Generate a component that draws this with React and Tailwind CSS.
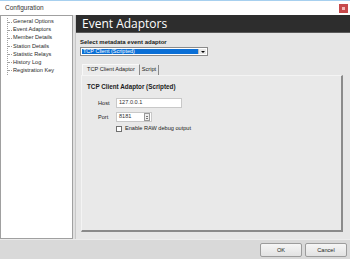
import React from 'react';

const treeItems = [
  'General Options',
  'Event Adaptors',
  'Member Details',
  'Station Details',
  'Statistic Relays',
  'History Log',
  'Registration Key',
];

const TreeView = () => (
  <div className="w-[73px] bg-white border border-[#a0a0a0] pt-[1px]">
    <div className="ml-[6px] mt-[1px] border-l border-dotted border-[#a0a0a0] w-fit">
      {treeItems.map((item) => (
        <div key={item} className="flex items-center h-[8.1px]">
          <span className="w-[4px] border-t border-dotted border-[#a0a0a0]" />
          <span className="ml-[1px] text-[5.6px] leading-none text-[#2a2a2a] whitespace-nowrap">{item}</span>
        </div>
      ))}
    </div>
  </div>
);

const App = () => {
  return (
    <div
      className="w-[350px] h-[259px] flex flex-col bg-[#d9d9d9] overflow-hidden border-t border-[#a7d0ef]"
      style={{ fontFamily: '"Liberation Sans", Arial, sans-serif' }}
    >
      {/* title bar */}
      <div className="h-[14px] bg-white flex items-center justify-between pl-[5px] pr-[2px]">
        <span className="text-[6.5px] text-[#333]">Configuration</span>
        <div className="w-[9px] h-[9px] bg-[#c7494b] flex items-center justify-center">
          <span className="w-[3px] h-[3px] bg-[#f2b8b8]" />
        </div>
      </div>

      {/* body */}
      <div className="h-[224px] flex">
        <TreeView />
        <div className="w-[3px] border-r border-[#c8c8c8] bg-[#e0e0e0]" />

        <div className="flex-1 flex flex-col bg-[#e6e6e6]">
          <div className="h-[18px] bg-[#2d2d2d] border-b border-[#5a5a5a] flex items-center pl-[6px]">
            <span className="text-[12px] text-white leading-none" style={{ fontFamily: '"Open Sans", sans-serif' }}>
              Event Adaptors
            </span>
          </div>

          <div className="pl-[4px] pr-[7px] pt-[6px] flex-1 flex flex-col">
            <div className="text-[6px] font-bold text-[#1a1a1a] leading-[7px]">Select metadata event adaptor</div>
            <div className="mt-[1px] w-[128px] h-[9px] bg-white border border-[#8a8a8a] flex p-[1px]">
              <div className="flex-1 bg-[#0a6fd6] flex items-center pl-[1px]">
                <span className="text-[5.5px] text-white leading-none">TCP Client (Scripted)</span>
              </div>
              <div className="w-[8px] bg-[#e8e8e8] border-l border-[#bdbdbd] flex items-center justify-center">
                <span className="w-0 h-0 border-l-[2px] border-r-[2px] border-t-[2px] border-l-transparent border-r-transparent border-t-black" />
              </div>
            </div>

            <div className="ml-[1px] mt-[8px] flex flex-col flex-1 mb-[7px]">
              <div className="flex h-[11px] items-end">
                <div className="ml-[1px] h-[11px] px-[4px] bg-[#ebebeb] border-t border-l border-[#f8f8f8] border-r-[#8a8a8a] border-r flex items-center">
                  <span className="text-[5.6px] text-[#1a1a1a] leading-none">TCP Client Adaptor</span>
                </div>
                <div className="h-[10px] px-[2px] border-r border-[#8a8a8a] flex items-center">
                  <span className="text-[5.6px] text-[#1a1a1a] leading-none">Script</span>
                </div>
              </div>
              <div className="flex-1 bg-[#e9e9e9] border border-[#f4f4f4] border-r-[#8a8a8a] border-b-[#8a8a8a] border-r-2 border-b-2 pl-[5px] pt-[7px]">
                <div className="text-[6.3px] font-bold text-[#1a1a1a] leading-[7px]">TCP Client Adaptor (Scripted)</div>

                <div className="mt-[8px] ml-[11px] flex items-center h-[10px]">
                  <span className="w-[18px] text-[5.6px] text-[#1a1a1a]">Host</span>
                  <div className="w-[66px] h-[10px] bg-white border border-[#c8c8c8] flex items-center pl-[2px]">
                    <span className="text-[5.6px] text-[#333] leading-none">127.0.0.1</span>
                  </div>
                </div>

                <div className="mt-[4px] ml-[11px] flex items-center h-[10px]">
                  <span className="w-[18px] text-[5.6px] text-[#1a1a1a]">Port</span>
                  <div className="w-[36px] h-[10px] bg-white border border-[#c8c8c8] flex items-center pl-[2px] pr-[1px]">
                    <span className="flex-1 text-[5.6px] text-[#333] leading-none">8181</span>
                    <div className="w-[6px] h-[8px] border border-[#9a9a9a] bg-[#eeeeee] flex flex-col items-center justify-center gap-[1px]">
                      <span className="w-0 h-0 border-l-[1.5px] border-r-[1.5px] border-b-[1.5px] border-l-transparent border-r-transparent border-b-black" />
                      <span className="w-0 h-0 border-l-[1.5px] border-r-[1.5px] border-t-[1.5px] border-l-transparent border-r-transparent border-t-black" />
                    </div>
                  </div>
                </div>

                <div className="mt-[3px] ml-[29px] flex items-center h-[8px]">
                  <span className="w-[6px] h-[6px] bg-white border border-[#707070]" />
                  <span className="ml-[3px] text-[5.6px] text-[#1a1a1a] leading-none">Enable RAW debug output</span>
                </div>
              </div>
            </div>
          </div>
        </div>
      </div>

      {/* footer */}
      <div className="flex-1 border-t border-[#ececec] flex items-start justify-end pt-[3px] pr-[3px] gap-[3px]">
        <button className="w-[42px] h-[14px] rounded-[2px] border border-[#9c9c9c] bg-gradient-to-b from-[#f6f6f6] to-[#e2e2e2] text-[5.6px] text-[#222]">
          OK
        </button>
        <button className="w-[42px] h-[14px] rounded-[2px] border border-[#9c9c9c] bg-gradient-to-b from-[#f6f6f6] to-[#e2e2e2] text-[5.6px] text-[#222]">
          Cancel
        </button>
      </div>
    </div>
  );
};

export default App;
